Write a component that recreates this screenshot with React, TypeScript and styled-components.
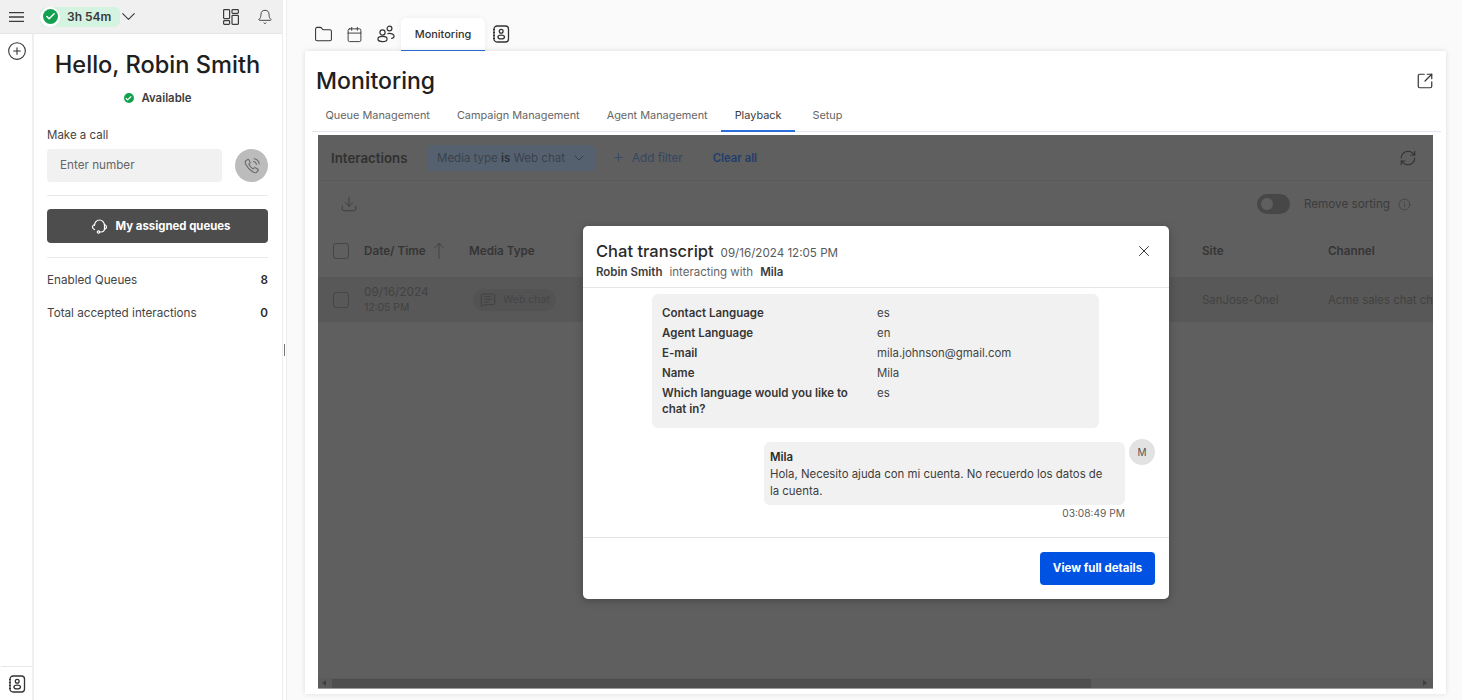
import styled, { createGlobalStyle } from 'styled-components';
import {
  Bell,
  Calendar,
  Check,
  ChevronDown,
  CirclePlus,
  Download,
  Folder,
  Info,
  MessageSquareText,
  Plus,
  RefreshCw,
  SquareArrowOutUpRight,
  X,
} from 'lucide-react';

const GlobalStyle = createGlobalStyle`
  html, body, #root { margin: 0; height: 100%; }
  body {
    font-family: Inter, "Liberation Sans", sans-serif;
    background: #fafafa;
    color: #2b2b2b;
    overflow: hidden;
  }
  * { box-sizing: border-box; }
`;

const Page = styled.div`
  display: flex;
  width: 1462px;
  height: 700px;
`;

/* left softphone column */
const Softphone = styled.aside`
  width: 282px;
  display: flex;
  flex-direction: column;
  background: #fff;
`;

const TopBar = styled.div`
  height: 34px;
  flex: none;
  display: flex;
  align-items: center;
  padding: 0 9px 0 9px;
  background: #f0f0f0;
  border-bottom: 1px solid #e6e6e6;
  color: #3c3c3c;
`;

const Timer = styled.div`
  display: flex;
  align-items: center;
  margin-left: 16px;
  width: 80px;
  height: 20px;
  border-radius: 6px;
  background: #d5f3e1;
  font-size: 12px;
  font-weight: 600;
  color: #3a3a3a;
`;

const TimerCheck = styled.span`
  width: 20px;
  height: 20px;
  margin-right: 7px;
  border-radius: 50%;
  background: #fff;
  display: flex;
  align-items: center;
  justify-content: center;
`;

const TimerChevron = styled(ChevronDown)`
  margin-left: -3px;
`;

const GreenDot = styled.span<{ $size: number }>`
  width: ${(p) => p.$size}px;
  height: ${(p) => p.$size}px;
  border-radius: 50%;
  background: #12a150;
  color: #fff;
  display: flex;
  align-items: center;
  justify-content: center;
`;

const BarIcons = styled.div`
  margin-left: auto;
  display: flex;
  align-items: center;
  gap: 18px;
`;

const SoftBody = styled.div`
  flex: 1;
  display: flex;
  min-height: 0;
`;

const Rail = styled.div`
  width: 34px;
  flex: none;
  display: flex;
  flex-direction: column;
  align-items: center;
  border-right: 2px solid #efefef;
  padding: 7px 0 0 1px;
  color: #333;
`;

const RailFoot = styled.div`
  margin-top: auto;
  width: 100%;
  height: 34px;
  border-top: 1px solid #e8e8e8;
  display: flex;
  align-items: center;
  justify-content: center;
`;

const SoftContent = styled.div`
  flex: 1;
  padding: 15px 14px 0 13px;
  display: flex;
  flex-direction: column;
`;

const Hello = styled.h1`
  margin: 0;
  font-size: 23.6px;
  line-height: 32px;
  font-weight: 500;
  text-align: center;
  color: #202020;
`;

const Status = styled.div`
  margin-top: 9px;
  display: flex;
  justify-content: center;
  align-items: center;
  gap: 8px;
  font-size: 11.4px;
  line-height: 16px;
  font-weight: 600;
  color: #3d3d3d;
`;

const CallLabel = styled.div`
  margin-top: 21px;
  font-size: 11.5px;
  line-height: 16px;
  color: #444;
`;

const CallRow = styled.div`
  margin-top: 6px;
  display: flex;
  justify-content: space-between;
  align-items: center;
`;

const NumberBox = styled.div`
  width: 175px;
  height: 33px;
  padding-left: 13px;
  border-radius: 4px;
  background: #f1f1f1;
  font-size: 11.7px;
  line-height: 33px;
  color: #666;
`;

const DialButton = styled.div`
  width: 33px;
  height: 33px;
  border-radius: 50%;
  background: #bcbcbc;
  color: #6a6a6a;
  display: flex;
  align-items: center;
  justify-content: center;
`;

const Rule = styled.div<{ $top: number }>`
  margin-top: ${(p) => p.$top}px;
  height: 1px;
  background: #e9e9e9;
`;

const QueuesButton = styled.div`
  margin-top: 13px;
  height: 34px;
  border-radius: 4px;
  background: #4d4d4d;
  color: #fff;
  font-size: 11.4px;
  font-weight: 700;
  display: flex;
  align-items: center;
  justify-content: center;
  gap: 7px;
  padding-left: 7px;
`;

const StatRow = styled.div<{ $top: number }>`
  margin-top: ${(p) => p.$top}px;
  display: flex;
  justify-content: space-between;
  font-size: 11.7px;
  line-height: 16px;
  color: #444;

  b {
    font-weight: 600;
    color: #2b2b2b;
  }
`;

const Splitter = styled.div`
  width: 5px;
  flex: none;
  background: #fff;
  border-left: 1px solid #ededed;
  border-right: 1px solid #ededed;
  display: flex;
  align-items: center;
  justify-content: center;

  &::after {
    content: '';
    width: 1px;
    height: 12px;
    background: #777;
  }
`;

/* main workspace */
const Workspace = styled.main`
  flex: 1;
  min-width: 0;
  padding: 18px 16px 6px 18px;
  display: flex;
  flex-direction: column;
`;

const AppTabs = styled.nav`
  height: 33px;
  flex: none;
  display: flex;
  align-items: flex-start;
  color: #333;
`;

const AppIcon = styled.span<{ $width: number; $inset?: number }>`
  width: ${(p) => p.$width}px;
  height: 32px;
  padding-left: ${(p) => p.$inset ?? 0}px;
  display: flex;
  align-items: center;
  justify-content: center;
`;

const ActiveAppTab = styled.div`
  width: 84px;
  height: 34px;
  background: #fff;
  border-bottom: 2px solid #2a6fdb;
  border-radius: 5px 5px 0 0;
  box-shadow: 0 0 5px rgba(0, 0, 0, 0.06);
  font-size: 10.9px;
  font-weight: 500;
  line-height: 32px;
  text-align: center;
  color: #333;
`;

const Card = styled.section`
  flex: 1;
  min-height: 0;
  background: #fff;
  box-shadow: 0 0 5px rgba(0, 0, 0, 0.12);
  padding: 0 13px 5px 7px;
  display: flex;
  flex-direction: column;
`;

const CardHead = styled.div`
  height: 60px;
  flex: none;
  margin-right: -1px;
  padding: 0 0 0 4px;
  display: flex;
  align-items: center;
  justify-content: space-between;
  color: #333;
`;

const PageTitle = styled.h2`
  margin: 0;
  font-size: 23px;
  font-weight: 500;
  line-height: 60px;
  color: #202020;
`;

const SubTabs = styled.div`
  height: 21px;
  flex: none;
  display: flex;
  margin-right: -8px;
  border-bottom: 1px solid #e2e5ee;
`;

const SubTab = styled.div<{ $active?: boolean }>`
  padding: 0 13.5px;
  height: 21px;
  font-size: 10.9px;
  line-height: 8px;
  color: ${(p) => (p.$active ? '#3a3a3a' : '#666')};
  border-bottom: 2px solid ${(p) => (p.$active ? '#2a6fdb' : 'transparent')};

  &:last-child {
    padding-left: 17.5px;
  }
`;

const Panel = styled.div`
  position: relative;
  flex: 1;
  min-height: 0;
  margin: 3px 0 0 6px;
  background: #5f5f5f;
  overflow: hidden;
  display: flex;
  flex-direction: column;
  border-bottom: 1px solid #9a9a9a;
`;

const FilterBar = styled.div`
  height: 46px;
  flex: none;
  display: flex;
  align-items: center;
  padding: 0 16px 0 13px;
  border-bottom: 1px solid #5a5a5a;
`;

const FilterTitle = styled.div`
  font-size: 13.3px;
  font-weight: 600;
  color: #303030;
  width: 96px;
`;

const FilterChip = styled.div`
  width: 168px;
  height: 26px;
  border-radius: 4px;
  background: #566170;
  display: flex;
  align-items: center;
  padding-left: 10px;
  gap: 6px;
  font-size: 11.5px;
  color: #39424d;

  b {
    font-weight: 600;
    color: #2c3137;
  }
`;

const AddFilter = styled.div`
  margin-left: 17px;
  display: flex;
  align-items: center;
  gap: 7px;
  font-size: 11.7px;
  color: #344662;
`;

const ClearAll = styled.div`
  margin-left: 30px;
  font-size: 11.3px;
  font-weight: 600;
  color: #1f3d6b;
`;

const ActionBar = styled.div`
  height: 46px;
  flex: none;
  display: flex;
  align-items: center;
  padding: 0 22px 0 22px;
  color: #3e3e3e;
`;

const Toggle = styled.div`
  margin-left: auto;
  width: 33px;
  height: 20px;
  border-radius: 10px;
  background: #474747;
  padding: 4px;

  &::before {
    content: '';
    display: block;
    width: 12px;
    height: 12px;
    border-radius: 50%;
    background: #5f5f5f;
  }
`;

const SortLabel = styled.span`
  margin: 0 8px 0 14px;
  font-size: 11.7px;
  color: #3c3c3c;
`;

const TableRow = styled.div<{ $band?: boolean }>`
  flex: none;
  height: ${(p) => (p.$band ? 45 : 50)}px;
  padding-bottom: ${(p) => (p.$band ? 0 : 2)}px;
  display: grid;
  grid-template-columns: 31px 105px 733px 126px 1fr;
  align-items: center;
  white-space: nowrap;
  overflow: hidden;
  padding-left: 15px;
  background: ${(p) => (p.$band ? '#585858' : 'transparent')};
  font-size: 11.4px;
  color: #424242;
`;

const Box = styled.span`
  width: 16px;
  height: 16px;
  border: 1px solid #454545;
  border-radius: 3px;
`;

const HeadCell = styled.div`
  display: flex;
  align-items: center;
  gap: 7px;
  font-size: 11.7px;
  font-weight: 600;
  color: #353535;
`;

const DateCell = styled.div`
  font-size: 11.8px;
  line-height: 15px;

  small {
    display: block;
    font-size: 10.4px;
  }
`;

const MediaPill = styled.span`
  display: inline-flex;
  align-items: center;
  gap: 7px;
  margin-left: 4px;
  height: 22px;
  padding: 0 6px 0 7px;
  border-radius: 11px;
  background: #535353;
  font-size: 10.5px;
  color: #454545;
`;

const ScrollTrack = styled.div`
  margin-top: auto;
  height: 10px;
  flex: none;
  display: flex;
  align-items: center;
  background: #5b5b5b;
`;

const ScrollThumb = styled.div`
  width: 759px;
  height: 9px;
  margin-left: 6px;
  background: #4e4e4e;
`;

const Arrow = styled.span`
  width: 5px;
  margin-left: 3px;
  margin-right: 5px;
  height: 0;
  border-style: solid;
  border-width: 3px 0 3px 4px;
  border-color: transparent transparent transparent #3f3f3f;
`;

const ArrowLeft = styled(Arrow)`
  margin-right: 0;
  border-width: 3px 4px 3px 0;
  border-color: transparent #3f3f3f transparent transparent;
`;

const ScrollEnd = styled.span`
  margin-left: auto;
  display: flex;
`;

/* modal over the dimmed table */
const Modal = styled.div`
  position: absolute;
  left: 265px;
  top: 91px;
  width: 586px;
  height: 373px;
  background: #fff;
  border-radius: 5px;
  box-shadow: 0 2px 8px rgba(0, 0, 0, 0.25);
  display: flex;
  flex-direction: column;
`;

const ModalHead = styled.div`
  height: 62px;
  flex: none;
  padding: 14px 16px 0 13px;
  border-bottom: 1px solid #e5e5e5;
  display: flex;
  justify-content: space-between;
  align-items: flex-start;
`;

const CloseIcon = styled(X)`
  margin-top: 2px;
`;

const TitleLine = styled.div`
  display: flex;
  align-items: baseline;
  gap: 7px;
  font-size: 11.6px;
  color: #5a5a5a;

  strong {
    font-size: 16.5px;
    line-height: 22px;
    font-weight: 500;
    color: #2a2a2a;
  }
`;

const Parties = styled.div`
  margin-top: 2px;
  display: flex;
  gap: 7px;
  font-size: 11.5px;
  line-height: 16px;
  color: #666;

  b {
    font-weight: 600;
    color: #3d3d3d;
  }
`;

const ModalBody = styled.div`
  flex: 1;
  min-height: 0;
  padding: 6px 14px 0 69px;
  display: flex;
  flex-direction: column;
  border-bottom: 1px solid #e5e5e5;
`;

const InfoCard = styled.div`
  width: 447px;
  height: 134px;
  border-radius: 6px;
  background: #f1f1f1;
  padding: 11px 10px;
  display: grid;
  grid-template-columns: 215px 1fr;
  grid-auto-rows: min-content;
  row-gap: 4px;
  font-size: 11.4px;
  line-height: 16px;
  color: #444;

  b {
    padding-right: 24px;
    font-size: 11.5px;
    font-weight: 600;
    color: #363636;
  }
`;

const MessageRow = styled.div`
  margin-top: 14px;
  display: flex;
  justify-content: flex-end;
  gap: 4px;
  align-items: flex-start;
`;

const Bubble = styled.div`
  width: 361px;
  height: 63px;
  padding: 7px 16px 7px 6px;
  border-radius: 6px;
  background: #f1f1f1;
  font-size: 11.4px;
  line-height: 17px;
  color: #3d3d3d;

  b {
    display: block;
    font-weight: 600;
    color: #2b2b2b;
  }
`;

const Avatar = styled.div`
  width: 26px;
  height: 26px;
  margin-top: -3px;
  border-radius: 50%;
  background: #e2e2e2;
  font-size: 10px;
  line-height: 26px;
  text-align: center;
  color: #555;
`;

const Stamp = styled.div`
  margin: 2px 30px 0 0;
  font-size: 10.2px;
  line-height: 13px;
  text-align: right;
  color: #5c5c5c;
`;

const ModalFoot = styled.div`
  height: 61px;
  flex: none;
  padding: 14px 14px 0 0;
  display: flex;
  justify-content: flex-end;
`;

const PrimaryButton = styled.div`
  width: 115px;
  height: 33px;
  border-radius: 4px;
  background: #0053e2;
  color: #fff;
  font-size: 11.5px;
  font-weight: 700;
  line-height: 33px;
  text-align: center;
`;

const RefreshIcon = styled(RefreshCw)`
  margin-left: auto;
`;

const MenuIcon = () => (
  <svg width="15" height="12" viewBox="0 0 15 12" fill="none" stroke="currentColor" strokeWidth="1.3">
    <path d="M0 1.700h15M0 6h15M0 10.300h15" />
  </svg>
);

const LayoutIcon = () => (
  <svg width="16" height="16" viewBox="0 0 16 16" fill="none" stroke="currentColor" strokeWidth="1.2">
    <rect x="0.6" y="0.6" width="6" height="9" rx="0.8" />
    <rect x="0.6" y="11.6" width="6" height="3.8" rx="0.8" />
    <rect x="9" y="0.6" width="6.4" height="3.8" rx="0.8" />
    <rect x="9" y="6.4" width="6.4" height="9" rx="0.8" />
  </svg>
);

const ContactBookIcon = () => (
  <svg width="18" height="18" viewBox="0 0 18 18" fill="none" stroke="currentColor" strokeWidth="1.3">
    <rect x="2" y="1" width="14.5" height="16" rx="3" />
    <circle cx="9.2" cy="6.3" r="1.9" />
    <ellipse cx="9.2" cy="12" rx="3.3" ry="1.9" />
    <path d="M1 4.5h2M1 7.5h2M1 10.5h2M1 13.5h2" strokeWidth="1" />
  </svg>
);

const PeopleIcon = () => (
  <svg width="18" height="18" viewBox="0 0 18 18" fill="none" stroke="currentColor" strokeWidth="1.2">
    <circle cx="5.5" cy="7.5" r="2.6" />
    <ellipse cx="5.5" cy="14" rx="4.6" ry="2.6" />
    <circle cx="12.5" cy="3.5" r="2.4" />
    <path d="M10.5 8.6c3.5-.8 6.6.6 6.6 2.6 0 1.2-1.2 2-3 2.3" />
  </svg>
);

const PhoneIcon = () => (
  <svg width="20" height="20" viewBox="0 0 20 20" fill="none" stroke="currentColor" strokeWidth="1.1" strokeLinecap="round" strokeLinejoin="round">
    <path d="M5.6 3.4 3.7 5c-.7.7-.6 2 0 3.3 1.6 3.3 4 5.9 7.3 7.8 1.4.8 2.6 1 3.4.2l1.7-1.8c.3-.4.2-.9-.2-1.2l-2.4-1.6c-.4-.3-.9-.2-1.2.1l-1 1.1c-1.9-1-3.5-2.7-4.5-4.7l1.100-1c.3-.3.4-.8.1-1.200L6.700 3.500c-.3-.4-.8-.4-1.100-.1Z" />
    <path d="M11.500 5.500c1.500.2 2.700 1.400 3 3M12 2.800c2.700.3 4.800 2.400 5.200 5.100" />
  </svg>
);

const HeadsetIcon = () => (
  <svg width="17" height="17" viewBox="0 0 17 17" fill="none" stroke="currentColor" strokeWidth="1.2" strokeLinecap="round">
    <path d="M3.500 7.500C3.500 4.500 5.700 2 8.500 2s5 2.500 5 5.500v3c0 2-1.500 3.500-3.500 3.500H8.800" />
    <path d="M3.500 6.500C2.200 7 1.500 8 1.500 9s.7 2 2 2.500M13.500 6.500c1.200.5 2 1.500 2 2.500s-.8 2-2 2.500" />
    <circle cx="7.500" cy="14" r="1.200" />
  </svg>
);

const SortArrow = () => (
  <svg width="12" height="18" viewBox="0 0 12 18" fill="none" stroke="#454545" strokeWidth="1">
    <path d="M6 17V1M1.500 6 6 1l4.500 5" />
  </svg>
);

const App = () => {
  return (
    <Page>
      <GlobalStyle />
      <Softphone>
        <TopBar>
          <MenuIcon />
          <Timer>
            <TimerCheck>
              <GreenDot $size={15}>
                <Check size={11} strokeWidth={3.2} />
              </GreenDot>
            </TimerCheck>
            3h 54m
          </Timer>
          <TimerChevron size={23} strokeWidth={1.2} />
          <BarIcons>
            <LayoutIcon />
            <Bell size={16} strokeWidth={1.4} />
          </BarIcons>
        </TopBar>
        <SoftBody>
          <Rail>
            <CirclePlus size={20} strokeWidth={1.3} />
            <RailFoot>
              <ContactBookIcon />
            </RailFoot>
          </Rail>
          <SoftContent>
            <Hello>Hello, Robin Smith</Hello>
            <Status>
              <GreenDot $size={10}>
                <Check size={7} strokeWidth={4} />
              </GreenDot>
              Available
            </Status>
            <CallLabel>Make a call</CallLabel>
            <CallRow>
              <NumberBox>Enter number</NumberBox>
              <DialButton>
                <PhoneIcon />
              </DialButton>
            </CallRow>
            <Rule $top={13} />
            <QueuesButton>
              <HeadsetIcon />
              My assigned queues
            </QueuesButton>
            <Rule $top={14} />
            <StatRow $top={14}>
              Enabled Queues
              <b>8</b>
            </StatRow>
            <StatRow $top={17}>
              Total accepted interactions
              <b>0</b>
            </StatRow>
          </SoftContent>
        </SoftBody>
      </Softphone>
      <Splitter />
      <Workspace>
        <AppTabs>
          <AppIcon $width={36}>
            <Folder size={19} strokeWidth={1.3} />
          </AppIcon>
          <AppIcon $width={26}>
            <Calendar size={17} strokeWidth={1.3} />
          </AppIcon>
          <AppIcon $width={34} $inset={4}>
            <PeopleIcon />
          </AppIcon>
          <ActiveAppTab>Monitoring</ActiveAppTab>
          <AppIcon $width={32}>
            <ContactBookIcon />
          </AppIcon>
        </AppTabs>
        <Card>
          <CardHead>
            <PageTitle>Monitoring</PageTitle>
            <SquareArrowOutUpRight size={18} strokeWidth={1.6} />
          </CardHead>
          <SubTabs>
            <SubTab>Queue Management</SubTab>
            <SubTab>Campaign Management</SubTab>
            <SubTab>Agent Management</SubTab>
            <SubTab $active>Playback</SubTab>
            <SubTab>Setup</SubTab>
          </SubTabs>
          <Panel>
            <FilterBar>
              <FilterTitle>Interactions</FilterTitle>
              <FilterChip>
                <span>
                  Media type <b>is</b> Web chat
                </span>
                <ChevronDown size={16} strokeWidth={1.4} color="#343a42" />
              </FilterChip>
              <AddFilter>
                <Plus size={13} strokeWidth={1.5} />
                Add filter
              </AddFilter>
              <ClearAll>Clear all</ClearAll>
              <RefreshIcon size={18} strokeWidth={1.4} color="#303030" />
            </FilterBar>
            <ActionBar>
              <Download size={18} strokeWidth={1.3} />
              <Toggle />
              <SortLabel>Remove sorting</SortLabel>
              <Info size={13} strokeWidth={1.4} />
            </ActionBar>
            <TableRow>
              <Box />
              <HeadCell>
                Date/ Time <SortArrow />
              </HeadCell>
              <HeadCell>Media Type</HeadCell>
              <HeadCell>Site</HeadCell>
              <HeadCell>Channel</HeadCell>
            </TableRow>
            <TableRow $band>
              <Box />
              <DateCell>
                09/16/2024
                <small>12:05 PM</small>
              </DateCell>
              <div>
                <MediaPill>
                  <MessageSquareText size={16} strokeWidth={1.3} color="#3f3f3f" />
                  Web chat
                </MediaPill>
              </div>
              <div>SanJose-Onel</div>
              <div>Acme sales chat channel</div>
            </TableRow>
            <ScrollTrack>
              <ArrowLeft />
              <ScrollThumb />
              <ScrollEnd>
                <Arrow />
              </ScrollEnd>
            </ScrollTrack>
            <Modal>
              <ModalHead>
                <div>
                  <TitleLine>
                    <strong>Chat transcript</strong>
                    09/16/2024 12:05 PM
                  </TitleLine>
                  <Parties>
                    <b>Robin Smith</b>
                    interacting with
                    <b>Mila</b>
                  </Parties>
                </div>
                <CloseIcon size={18} strokeWidth={1.3} color="#333" />
              </ModalHead>
              <ModalBody>
                <InfoCard>
                  <b>Contact Language</b>
                  <span>es</span>
                  <b>Agent Language</b>
                  <span>en</span>
                  <b>E-mail</b>
                  <span>mila.johnson@gmail.com</span>
                  <b>Name</b>
                  <span>Mila</span>
                  <b>Which language would you like to chat in?</b>
                  <span>es</span>
                </InfoCard>
                <MessageRow>
                  <Bubble>
                    <b>Mila</b>
                    Hola, Necesito ajuda con mi cuenta. No recuerdo los datos de la cuenta.
                  </Bubble>
                  <Avatar>M</Avatar>
                </MessageRow>
                <Stamp>03:08:49 PM</Stamp>
              </ModalBody>
              <ModalFoot>
                <PrimaryButton>View full details</PrimaryButton>
              </ModalFoot>
            </Modal>
          </Panel>
        </Card>
      </Workspace>
    </Page>
  );
};

export default App;
